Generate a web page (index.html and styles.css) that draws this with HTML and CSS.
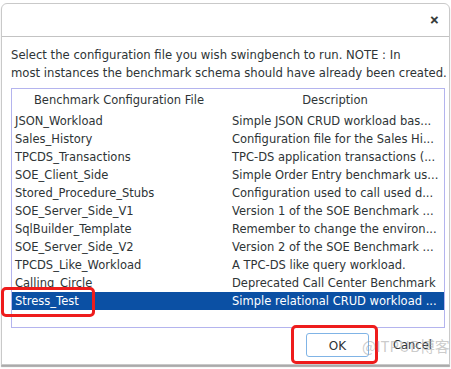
FILE: index.html
```html
<!DOCTYPE html>
<html lang="en">
<head>
  <meta charset="UTF-8">
  <meta name="viewport" content="width=device-width, initial-scale=1.0">
  <title>Select Config</title>
  <link rel="stylesheet" href="styles.css">
</head>
<body>
  <div class="dialog">
    <div class="titlebar">
      <span class="close">&#x2715;</span>
    </div>
    <div class="content">
      <p class="message">Select the configuration file you wish swingbench to run. NOTE : In<br>most instances the benchmark schema should have already been created.</p>
      <div class="table">
        <div class="row head">
          <div class="cell c1">Benchmark Configuration File</div>
          <div class="cell c2">Description</div>
        </div>
        <div class="row"><div class="cell c1">JSON_Workload</div><div class="cell c2">Simple JSON CRUD workload bas...</div></div>
        <div class="row"><div class="cell c1">Sales_History</div><div class="cell c2">Configuration file for the Sales Hi...</div></div>
        <div class="row"><div class="cell c1">TPCDS_Transactions</div><div class="cell c2">TPC-DS application transactions (...</div></div>
        <div class="row"><div class="cell c1">SOE_Client_Side</div><div class="cell c2">Simple Order Entry benchmark us...</div></div>
        <div class="row"><div class="cell c1">Stored_Procedure_Stubs</div><div class="cell c2">Configuration used to call used d...</div></div>
        <div class="row"><div class="cell c1">SOE_Server_Side_V1</div><div class="cell c2">Version 1 of the SOE Benchmark ...</div></div>
        <div class="row"><div class="cell c1">SqlBuilder_Template</div><div class="cell c2">Remember to change the environ...</div></div>
        <div class="row"><div class="cell c1">SOE_Server_Side_V2</div><div class="cell c2">Version 2 of the SOE Benchmark ...</div></div>
        <div class="row"><div class="cell c1">TPCDS_Like_Workload</div><div class="cell c2">A TPC-DS like query workload.</div></div>
        <div class="row"><div class="cell c1">Calling_Circle</div><div class="cell c2">Deprecated Call Center Benchmark</div></div>
        <div class="row selected"><div class="cell c1">Stress_Test</div><div class="cell c2">Simple relational CRUD workload ...</div></div>
      </div>
      <div class="buttons">
        <div class="btn ok">OK</div>
        <div class="btn cancel">Cancel</div>
      </div>
    </div>
  </div>

  <div class="mark mark-row"></div>
  <div class="mark mark-ok"></div>
  <div class="watermark">@ITPUB博客</div>
</body>
</html>
```

FILE: styles.css
```css
body, html {
  margin: 0;
  padding: 0;
  background: #fff;
}
body {
  position: relative;
  width: 451px;
  height: 369px;
  overflow: hidden;
  font-family: "DejaVu Sans", sans-serif;
  font-size: 11.5px;
  color: #2e3436;
}
.dialog {
  margin: 3px 1px 0 1px;
  height: 362px;
  border: 1px solid #c9c9c9;
  border-radius: 6px 6px 0 0;
  box-shadow: 0 2px 1px #aaa;
  box-sizing: border-box;
  background: #fff;
}
.titlebar {
  height: 32px;
  border-bottom: 1px solid #c3c3c3;
  display: flex;
  justify-content: flex-end;
  align-items: center;
  padding-right: 10px;
}
.close {
  font-size: 11px;
  font-weight: bold;
  color: #2e3436;
  -webkit-text-stroke: 0.6px #2e3436;
}
.content {
  padding: 0 6px 0 9px;
}
.message {
  margin: 9px 0 0 0;
  line-height: 18px;
  font-size: 11.65px;
  white-space: nowrap;
}
.table {
  margin-top: 6px;
  width: 434px;
  height: 240px;
  border: 1px solid #b4b4ee;
  box-sizing: border-box;
}
.row {
  display: flex;
  height: 18px;
  line-height: 18px;
}
.row.head {
  height: 23px;
  line-height: 23px;
}
.cell {
  white-space: nowrap;
  overflow: hidden;
  padding-left: 3px;
}
.c1 {
  width: 214px;
}
.c2 {
  flex: 1;
}
.head .cell {
  text-align: center;
  padding-left: 0;
}
.row.selected {
  background: #0b50a4;
  color: #fff;
}
.buttons {
  display: flex;
  align-items: center;
  margin-top: 5px;
  padding-left: 295px;
}
.btn {
  height: 24px;
  line-height: 24px;
  text-align: center;
}
.ok {
  width: 63px;
  border: 1px solid #80b4e6;
  border-radius: 3px;
  box-sizing: border-box;
  font-size: 12px;
}
.cancel {
  margin-left: 24px;
}
.mark {
  position: absolute;
  border: 3px solid #ee1c1c;
  border-radius: 5px;
  box-sizing: border-box;
}
.mark-row {
  left: 1px;
  top: 287px;
  width: 94px;
  height: 30px;
}
.mark-ok {
  left: 291px;
  top: 325px;
  width: 87px;
  height: 39px;
}
.watermark {
  position: absolute;
  left: 362px;
  top: 335px;
  font-family: "Noto Sans CJK SC", sans-serif;
  font-size: 15px;
  color: rgba(160, 160, 160, 0.55);
}
```
